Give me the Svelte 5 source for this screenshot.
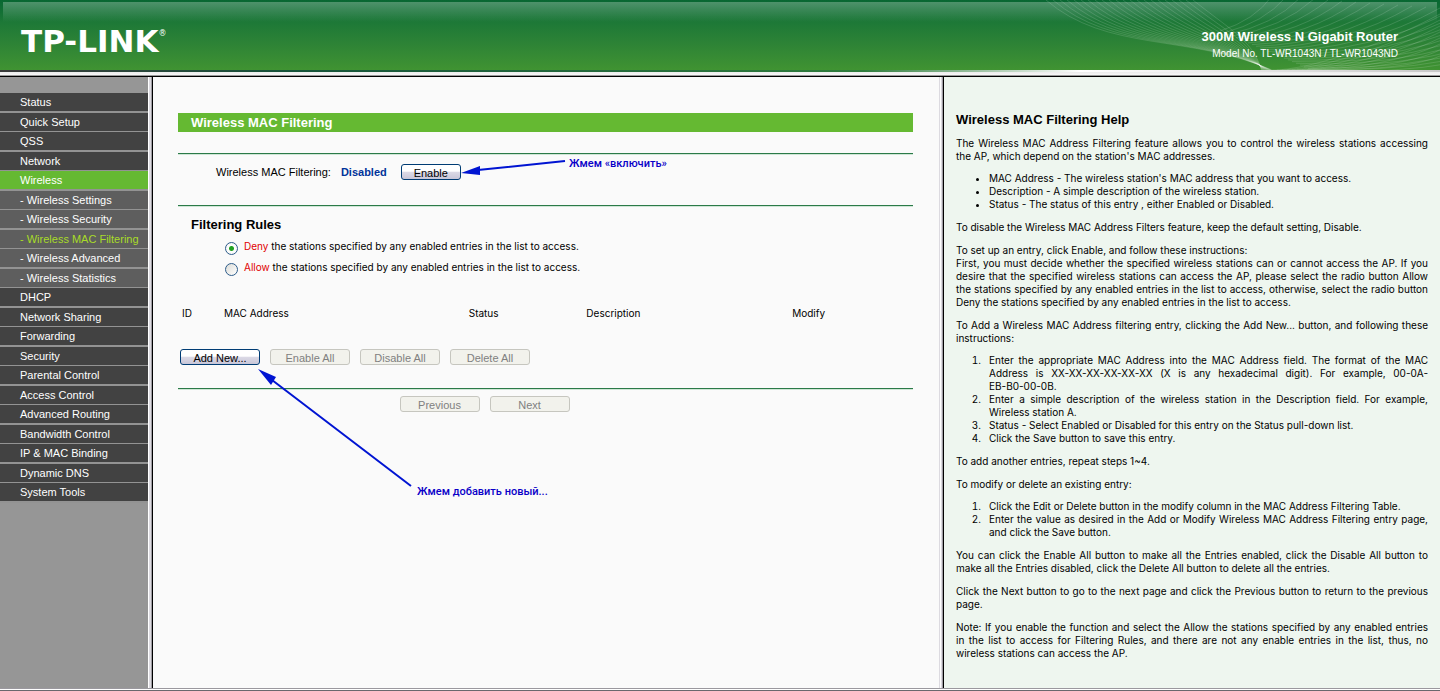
<script>
  const menu = [
    { label: "Status" },
    { label: "Quick Setup" },
    { label: "QSS" },
    { label: "Network" },
    { label: "Wireless", open: true },
    { label: "- Wireless Settings", sub: true },
    { label: "- Wireless Security", sub: true },
    { label: "- Wireless MAC Filtering", sub: true, current: true },
    { label: "- Wireless Advanced", sub: true },
    { label: "- Wireless Statistics", sub: true },
    { label: "DHCP" },
    { label: "Network Sharing" },
    { label: "Forwarding" },
    { label: "Security" },
    { label: "Parental Control" },
    { label: "Access Control" },
    { label: "Advanced Routing" },
    { label: "Bandwidth Control" },
    { label: "IP & MAC Binding" },
    { label: "Dynamic DNS" },
    { label: "System Tools" },
  ];

  const rules = [
    { value: "deny", word: "Deny" },
    { value: "allow", word: "Allow" },
  ];

  // strands of the banner wave, 400 x 70
  const falling = Array.from({ length: 22 }, (_, i) => {
    return `M${6 + i * 7} 0C${66 + i * 6} ${52 - i},${150 + i * 3} ${34 + i / 3},${232 - i / 2} 70`;
  });
  const rising = Array.from({ length: 24 }, (_, i) => {
    return `M${180 + i * 4} ${31 + i * 1.7}Q${215 + i * 9} ${20 + i * 2.6},${232 + i * 14} ${-4 + i}`;
  });
  const sweeping = Array.from({ length: 8 }, (_, i) => {
    return `M${232 + i * 5} 70C${270 + i * 8} 70,${340 + i * 5} ${46 + i * 3},400 ${14 + i * 6}`;
  });

  let rule = $state("deny");
  let enabled = $state(false);
</script>

<div class="page">
  <header class="banner">
    <svg class="wave" viewBox="0 0 400 70" aria-hidden="true">
      {#each [...falling, ...rising, ...sweeping] as d}
        <path {d} />
      {/each}
    </svg>
    <div class="logo">TP-LINK<sup>®</sup></div>
    <div class="model">
      <strong>300M Wireless N Gigabit Router</strong>
      <span>Model No. TL-WR1043N / TL-WR1043ND</span>
    </div>
  </header>
  <div class="strip"></div>

  <div class="panes">
    <nav class="sidebar">
      <ul>
        {#each menu as item}
          <li>
            <a
              href="#top"
              class:open={item.open}
              class:sub={item.sub}
              class:current={item.current}>{item.label}</a
            >
          </li>
        {/each}
      </ul>
    </nav>

    <main class="content">
      <h1>Wireless MAC Filtering</h1>

      <section class="state">
        <span class="state-label">Wireless MAC Filtering:</span>
        <strong>{enabled ? "Enabled" : "Disabled"}</strong>
        <button class="small" onclick={() => (enabled = !enabled)}>
          {enabled ? "Disable" : "Enable"}
        </button>
      </section>

      <section class="rules">
        <h2>Filtering Rules</h2>
        {#each rules as item}
          <label>
            <input type="radio" name="rule" value={item.value} bind:group={rule} />
            <span>
              <em>{item.word}</em> the stations specified by any enabled entries
              in the list to access.
            </span>
          </label>
        {/each}

        <table>
          <thead>
            <tr>
              <th class="col-id">ID</th>
              <th class="col-mac">MAC Address</th>
              <th class="col-status">Status</th>
              <th class="col-desc">Description</th>
              <th>Modify</th>
            </tr>
          </thead>
        </table>

        <div class="actions">
          <button>Add New...</button>
          <button disabled>Enable All</button>
          <button disabled>Disable All</button>
          <button disabled>Delete All</button>
        </div>
      </section>

      <div class="pager">
        <button disabled>Previous</button>
        <button disabled>Next</button>
      </div>

      <svg class="arrows" width="500" height="420" aria-hidden="true">
        <path class="shaft" d="M412 84L325 93M258 409L119 303" />
        <path class="head" d="M308 96L327 89L327 98ZM105 292L123 300L118 308Z" />
      </svg>
      <p class="note note-enable">Жмем «включить»</p>
      <p class="note note-add">Жмем добавить новый...</p>
    </main>

    <aside class="help">
      <h2>Wireless MAC Filtering Help</h2>
      <p>
        The Wireless MAC Address Filtering feature allows you to control the
        wireless stations accessing the AP, which depend on the station's MAC
        addresses.
      </p>
      <ul>
        <li>
          MAC Address - The wireless station's MAC address that you want to
          access.
        </li>
        <li>Description - A simple description of the wireless station.</li>
        <li>Status - The status of this entry , either Enabled or Disabled.</li>
      </ul>
      <p>
        To disable the Wireless MAC Address Filters feature, keep the default
        setting, Disable.
      </p>
      <p>
        To set up an entry, click Enable, and follow these instructions:<br />
        First, you must decide whether the specified wireless stations can or
        cannot access the AP. If you desire that the specified wireless stations
        can access the AP, please select the radio button Allow the stations
        specified by any enabled entries in the list to access, otherwise,
        select the radio button Deny the stations specified by any enabled
        entries in the list to access.
      </p>
      <p>
        To Add a Wireless MAC Address filtering entry, clicking the Add New...
        button, and following these instructions:
      </p>
      <ol>
        <li>
          Enter the appropriate MAC Address into the MAC Address field. The
          format of the MAC Address is XX-XX-XX-XX-XX-XX (X is any hexadecimal
          digit). For example, 00-0A-<span class="nowrap">EB-B0-00-0B.</span>
        </li>
        <li>
          Enter a simple description of the wireless station in the Description
          field. For example, Wireless station A.
        </li>
        <li>
          Status - Select Enabled or Disabled for this entry on the Status
          pull-down list.
        </li>
        <li>Click the Save button to save this entry.</li>
      </ol>
      <p>To add another entries, repeat steps 1~4.</p>
      <p>To modify or delete an existing entry:</p>
      <ol>
        <li>
          Click the Edit or Delete button in the modify column in the MAC
          Address Filtering Table.
        </li>
        <li>
          Enter the value as desired in the Add or Modify Wireless MAC Address
          Filtering entry page, and click the Save button.
        </li>
      </ol>
      <p>
        You can click the Enable All button to make all the Entries enabled,
        click the Disable All button to make all the Entries disabled, click the
        Delete All button to delete all the entries.
      </p>
      <p>
        Click the Next button to go to the next page and click the Previous
        button to return to the previous page.
      </p>
      <p>
        Note: If you enable the function and select the Allow the stations
        specified by any enabled entries <span class="nowrap">in the</span> list
        to access for Filtering Rules, and there are not any enable entries in
        the list, thus, no wireless stations can access the AP.
      </p>
    </aside>
  </div>
  <div class="bottom"></div>
</div>

<style>
  :global(body) {
    margin: 0;
    font-family: Inter, Arial, sans-serif;
    font-size: 10px;
    color: #000;
    background: #fafafa;
  }

  .page {
    display: flex;
    flex-direction: column;
    min-height: 100vh;
  }

  .banner {
    position: relative;
    display: flex;
    justify-content: space-between;
    height: 70px;
    box-sizing: border-box;
    padding: 24px 42px 0 21px;
    color: #fff;
    background: linear-gradient(#086732, #1d7837 22px, #2c8236 42px, #409332);
  }

  .banner::before {
    content: "";
    position: absolute;
    inset: 2px 3px auto;
    height: 20px;
    background: linear-gradient(
      rgba(255, 255, 255, 0.28),
      rgba(255, 255, 255, 0)
    );
  }

  .wave {
    position: absolute;
    top: 0;
    right: 0;
    width: 400px;
    height: 70px;
    fill: none;
    stroke: #fff;
    stroke-opacity: 0.14;
  }

  .logo {
    position: relative;
    font: bold 31px/34px "DejaVu Sans", Verdana, sans-serif;
  }

  .logo sup {
    font-size: 8px;
    font-weight: normal;
    line-height: 8px;
    vertical-align: 16px;
  }

  .model {
    position: relative;
    display: flex;
    flex-direction: column;
    align-items: flex-end;
    padding-top: 5px;
    gap: 2px;
    font-family: "Liberation Sans", Arial, sans-serif;
  }

  .model strong {
    font-size: 13px;
    line-height: 16px;
  }

  .model span {
    line-height: 13px;
  }

  .strip {
    height: 7px;
    background:
      linear-gradient(#000, #000) bottom / 100% 1px no-repeat,
      linear-gradient(#9a9a9a, #9a9a9a) 0 5px / 100% 1px no-repeat,
      linear-gradient(to right, #3a3a3a, #16543a 20%, #2f7d3c 60%, #fff 75%, #c8c8c8)
        top / 100% 2px no-repeat,
      linear-gradient(#e4e4e4, #fff);
  }

  .panes {
    flex: 1;
    display: grid;
    grid-template-columns: 153px minmax(0, 262fr) minmax(0, 167fr);
  }

  .sidebar {
    padding: 16px 5px 0 0;
    background:
      linear-gradient(
          to right,
          #fff 1px,
          #dcdae0 1px 3px,
          #a09ea4 3px 4px,
          #000 4px
        )
        right / 5px 100% no-repeat,
      #969696;
  }

  .sidebar ul {
    margin: 0;
    padding: 0;
    list-style: none;
    font-family: "Liberation Sans", Arial, sans-serif;
  }

  .sidebar li {
    border-bottom: 1px solid #939393;
  }

  .sidebar li:nth-child(odd) {
    border-bottom-width: 2px;
  }

  .sidebar a {
    display: block;
    padding-left: 20px;
    color: #fff;
    background: #424242;
    font-size: 11px;
    line-height: 18px;
    text-decoration: none;
  }

  .sidebar a.sub {
    background: #5e5e5e;
  }

  .sidebar a.open {
    background: #65b932;
  }

  .sidebar a.current {
    color: #a8dc28;
  }

  .content {
    position: relative;
    padding: 36px 26px 0 25px;
  }

  h1,
  h2 {
    margin: 0;
    font: bold 13px/19px "Liberation Sans", Arial, sans-serif;
  }

  h1 {
    padding-left: 13px;
    color: #fff;
    background: #65b932;
  }

  .state {
    display: flex;
    align-items: center;
    margin-top: 21px;
    height: 51px;
    box-sizing: border-box;
    padding: 0 0 15px 38px;
    border-top: 1px solid #2b7a48;
    box-shadow: inset 0 1px #cfe6d6;
    font-family: "Liberation Sans", Arial, sans-serif;
    font-size: 11px;
  }

  .state strong {
    margin: 0 14px 0 10px;
    color: #003399;
  }

  .rules {
    padding-top: 9px;
    margin-top: 1px;
    border-top: 1px solid #2b7a48;
    box-shadow: inset 0 1px #cfe6d6;
  }

  .rules h2 {
    padding: 0 0 2px 13px;
  }

  .rules label {
    display: flex;
    align-items: center;
    height: 21px;
    padding-left: 47px;
    gap: 6px;
  }

  .rules label span {
    padding-bottom: 2px;
  }

  .rules em {
    color: #e00000;
    font-style: normal;
  }

  input {
    appearance: none;
    width: 13px;
    height: 13px;
    margin: 4px 0 0;
    border: 1px solid #2d5c8a;
    border-radius: 50%;
    background: linear-gradient(135deg, #dcdcd7, #fff);
  }

  input:checked {
    background: radial-gradient(circle, #21a121 0 2px, #fff 3px, #f0f0ee);
  }

  table {
    width: 100%;
    margin-top: 28px;
    border-collapse: collapse;
    table-layout: fixed;
  }

  th {
    box-sizing: border-box;
    padding: 0 0 0 4px;
    font-weight: normal;
    line-height: 14px;
    text-align: left;
  }

  .col-id {
    width: 42px;
  }

  .col-mac {
    width: 33.3%;
  }

  .col-status {
    width: 16%;
  }

  .col-desc {
    width: 28%;
  }

  .actions {
    display: flex;
    gap: 10px;
    padding: 29px 0 23px 2px;
  }

  .pager {
    display: flex;
    justify-content: center;
    gap: 10px;
    padding: 7px 122px 0 0;
    border-top: 1px solid #2b7a48;
    box-shadow: inset 0 1px #cfe6d6;
  }

  button {
    width: 80px;
    height: 16px;
    padding: 2px 0 0;
    color: #000;
    background: linear-gradient(#fff 45%, #dcdae6 50%, #c8c6d8);
    border: 1px solid #003c74;
    border-radius: 3px;
    font: 11px/12px "Liberation Sans", Arial, sans-serif;
  }

  button.small {
    width: 60px;
  }

  button:disabled {
    color: #808080;
    background: #f2f2ec;
    border-color: #c6c6bf;
  }

  .arrows {
    position: absolute;
    top: 0;
    left: 0;
  }

  .shaft {
    fill: none;
    stroke: #0014d2;
    stroke-width: 2;
  }

  .head {
    fill: #0014d2;
  }

  .note {
    position: absolute;
    margin: 0;
    color: #0a00c8;
    font: 500 11px/14px Roboto, sans-serif;
    white-space: nowrap;
  }

  .note-enable {
    top: 80px;
    left: 416px;
  }

  .note-add {
    top: 408px;
    left: 264px;
  }

  .help {
    padding: 33px 12px 12px 17px;
    background:
      linear-gradient(
          to right,
          #dcdae0 1px,
          #fff 1px 2px,
          #dcdae0 2px 3px,
          #a09ea4 3px 4px,
          #000 4px
        )
        left / 5px 100% no-repeat,
      #eef6ef;
    line-height: 13px;
    text-align: justify;
  }

  .help h2 {
    margin-bottom: 8px;
  }

  .help p {
    margin: 0 0 10px;
  }

  .help ul,
  .help ol {
    margin: -1px 0 10px;
    padding-left: 33px;
  }

  .help ol li::marker {
    content: counter(list-item) ".\00a0\00a0\00a0";
  }

  .nowrap {
    white-space: nowrap;
  }

  .bottom {
    height: 1px;
    border-top: 1px solid #9a989e;
    border-bottom: 1px solid #6a686e;
    background: #fff;
  }
</style>
